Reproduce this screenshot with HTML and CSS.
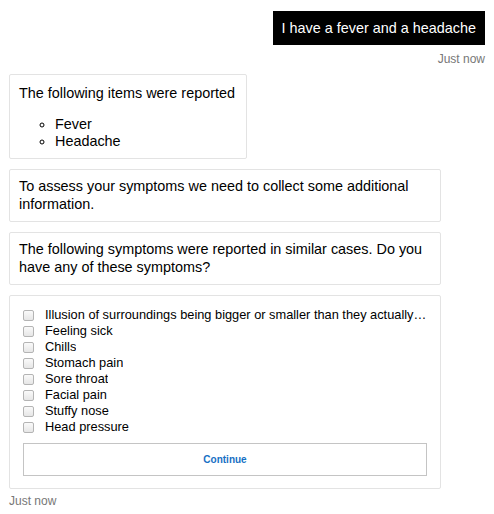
FILE: index.html
```html
<!DOCTYPE html>
<html>
<head>
<meta charset="utf-8">
<link rel="stylesheet" href="styles.css">
</head>
<body>
<div class="chat">
  <div class="user-group">
    <div class="user-bubble">I have a fever and a headache</div>
    <div class="time time-right">Just now</div>
  </div>
  <div class="bot-group">
    <div class="card">
      <p class="card-text">The following items were reported</p>
      <ul class="items">
        <li>Fever</li>
        <li>Headache</li>
      </ul>
    </div>
    <div class="card wide">
      <p class="card-text">To assess your symptoms we need to collect some additional information.</p>
    </div>
    <div class="card wide">
      <p class="card-text">The following symptoms were reported in similar cases. Do you have any of these symptoms?</p>
    </div>
    <div class="card wide form">
      <ul class="checks">
        <li><label><input type="checkbox"><span>Illusion of surroundings being bigger or smaller than they actually are</span></label></li>
        <li><label><input type="checkbox"><span>Feeling sick</span></label></li>
        <li><label><input type="checkbox"><span>Chills</span></label></li>
        <li><label><input type="checkbox"><span>Stomach pain</span></label></li>
        <li><label><input type="checkbox"><span>Sore throat</span></label></li>
        <li><label><input type="checkbox"><span>Facial pain</span></label></li>
        <li><label><input type="checkbox"><span>Stuffy nose</span></label></li>
        <li><label><input type="checkbox"><span>Head pressure</span></label></li>
      </ul>
      <button class="continue">Continue</button>
    </div>
    <div class="time">Just now</div>
  </div>
</div>
</body>
</html>
```
FILE: styles.css
```css
html, body {
  margin: 0;
  padding: 0;
  background: #fff;
}
body {
  font-family: "Liberation Sans", Arial, sans-serif;
  color: #000;
}
.chat {
  padding: 11px 9px;
  display: flex;
  flex-direction: column;
}
.user-group {
  display: flex;
  flex-direction: column;
  align-items: flex-end;
}
.user-bubble {
  background: #000;
  color: #fff;
  font-size: 14.4px;
  line-height: 18px;
  padding: 8px 9px;
}
.time {
  font-size: 12px;
  line-height: 14px;
  color: #777;
}
.time-right {
  margin-top: 7px;
}
.bot-group {
  margin-top: 8px;
  display: flex;
  flex-direction: column;
  align-items: flex-start;
}
.card {
  border: 1px solid #e3e3e3;
  border-radius: 2px;
  padding: 9px 11px 8px 9px;
  margin-bottom: 10px;
  font-size: 14.4px;
  line-height: 18px;
  box-sizing: border-box;
}
.card.wide {
  width: 432px;
  padding: 7px 9px 8px 9px;
}
.card-text {
  margin: 0;
}
.items {
  margin: 14px 0 0 0;
  padding-left: 36px;
  list-style: circle;
  line-height: 17px;
}
.card.form {
  padding: 11px 13px 12px 13px;
  margin-bottom: 5px;
}
.checks {
  list-style: none;
  margin: 0;
  padding: 0;
  font-size: 12.8px;
  line-height: 16px;
}
.checks label {
  display: flex;
  align-items: center;
}
.checks span {
  white-space: nowrap;
  overflow: hidden;
  text-overflow: ellipsis;
  min-width: 0;
}
.checks input {
  appearance: none;
  -webkit-appearance: none;
  width: 11px;
  height: 11px;
  margin: 0 11px 0 0;
  border: 1px solid #b4b4b4;
  border-radius: 2px;
  background: linear-gradient(#fafafa, #e6e6e6);
  flex: none;
  box-sizing: border-box;
}
.continue {
  display: block;
  width: 100%;
  height: 33px;
  margin-top: 8px;
  background: #fff;
  border: 1px solid #c4c4c4;
  border-radius: 0;
  color: #1670c4;
  font-family: "Liberation Sans", Arial, sans-serif;
  font-weight: bold;
  font-size: 10px;
}
```
